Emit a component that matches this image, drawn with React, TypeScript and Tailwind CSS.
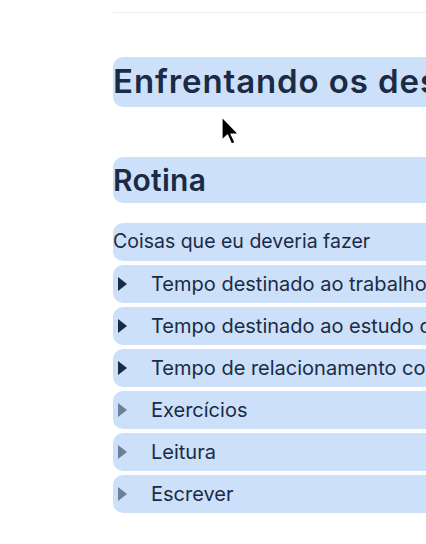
import React from "react";

const rows: { label: string; dark: boolean }[] = [
  { label: "Tempo destinado ao trabalho remunerado", dark: true },
  { label: "Tempo destinado ao estudo de programação", dark: true },
  { label: "Tempo de relacionamento com a família", dark: true },
  { label: "Exercícios", dark: false },
  { label: "Leitura", dark: false },
  { label: "Escrever", dark: false },
];

function Tri({ dark }: { dark: boolean }) {
  return (
    <svg width="11" height="16" viewBox="0 0 11 16" className="shrink-0">
      <path d="M1 1 L10 8 L1 15 Z" fill={dark ? "#1b2b45" : "#6f7f96"} />
    </svg>
  );
}

export default function App() {
  return (
    <div
      className="relative w-[426px] h-[544px] overflow-hidden bg-white text-[#1b2b45]"
      style={{ fontFamily: "Inter, 'Noto Sans', sans-serif" }}
    >
      <div className="pl-[113px] w-[900px] whitespace-nowrap">
        <div className="pt-[12px] h-[13px] border-b border-[#ececec]" />
        <div className="mt-[44px] h-[50px] rounded-[10px] bg-[#cce0fa] flex items-center text-[33px] font-semibold tracking-[0.9px]">
          Enfrentando os desafios do dia a dia
        </div>
        <div className="mt-[50px] h-[46px] rounded-[10px] bg-[#cce0fa] flex items-center text-[30px] font-semibold tracking-[0.3px]">
          Rotina
        </div>
        <div className="mt-[20px] flex flex-col gap-[4px]">
          <div className="h-[38px] rounded-[10px] bg-[#cce0fa] flex items-center text-[19.5px]">
            Coisas que eu deveria fazer
          </div>
          {rows.map((r) => (
            <div
              key={r.label}
              className="h-[38px] rounded-[10px] bg-[#cce0fa] flex items-center text-[20px]"
            >
              <div className="w-[38px] pl-[4px] flex items-center">
                <Tri dark={r.dark} />
              </div>
              <span>{r.label}</span>
            </div>
          ))}
        </div>
      </div>
      <svg
        className="absolute left-[220px] top-[116px]"
        width="24"
        height="32"
        viewBox="0 0 24 32"
      >
        <path
          d="M2 1 L2 24 L7.5 19 L11.5 28 L15 26.5 L11 18 L18.5 18 Z"
          fill="#000"
          stroke="#fff"
          strokeWidth="1.2"
          strokeLinejoin="round"
        />
      </svg>
    </div>
  );
}
